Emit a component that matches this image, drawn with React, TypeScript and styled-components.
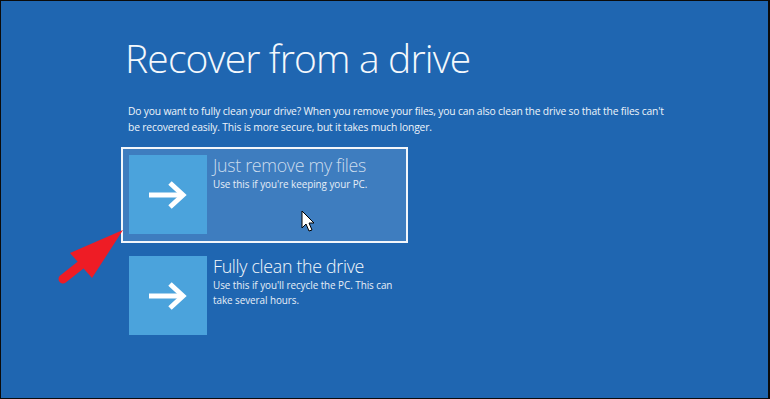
import React from "react";
import styled, { createGlobalStyle } from "styled-components";

const Global = createGlobalStyle`
  html, body { margin: 0; padding: 0; background: #000; }
  body { font-family: "Open Sans", "Noto Sans", sans-serif; }
`;

const Screen = styled.div`
  position: relative;
  width: 770px;
  height: 399px;
  box-sizing: border-box;
  border-style: solid;
  border-color: #0b0b0b;
  border-width: 1px 2px 1px 1px;
  background: #1f66b1;
  overflow: hidden;
  color: #fff;
`;

const Content = styled.div`
  display: flex;
  flex-direction: column;
  padding: 29px 0 0 120px;
`;

const Title = styled.h1`
  margin: 0 0 0 4px;
  font-family: "Open Sans", sans-serif;
  font-weight: 300;
  font-size: 39px;
  line-height: 56px;
  letter-spacing: -0.85px;
  color: #f4f8fc;
`;

const Intro = styled.p`
  margin: 17px 0 0 7px;
  width: 542px;
  font-size: 10.3px;
  line-height: 16px;
  letter-spacing: -0.17px;
  color: #eef4fa;
`;

const Options = styled.div`
  display: flex;
  flex-direction: column;
  gap: 5px;
  margin-top: 12px;
`;

const Option = styled.div<{ $selected?: boolean }>`
  display: flex;
  gap: 6px;
  width: 287px;
  height: 96px;
  box-sizing: border-box;
  padding: 6px;
  border: 2px solid ${(p) => (p.$selected ? "#f2f6fb" : "transparent")};
  background: ${(p) => (p.$selected ? "#3e7dbf" : "transparent")};
`;

const Tile = styled.div`
  flex: 0 0 78px;
  height: 79px;
  background: #4ba3dc;
  display: flex;
  align-items: center;
  justify-content: center;
`;

const Text = styled.div`
  display: flex;
  flex-direction: column;
`;

const OptionTitle = styled.div<{ $dim?: boolean }>`
  font-weight: 300;
  font-size: 17.8px;
  line-height: 22px;
  letter-spacing: -0.3px;
  color: ${(p) => (p.$dim ? "#cbdcee" : "#f4f8fc")};
  margin-top: -1px;
`;

const OptionDesc = styled.div`
  font-size: 9.9px;
  line-height: 15px;
  letter-spacing: -0.05px;
  color: #e6eef7;
  width: 200px;
  margin-top: 1px;
`;

const Overlay = styled.svg`
  position: absolute;
  left: 0;
  top: 0;
  pointer-events: none;
`;

const ArrowIcon = () => (
  <svg width="40" height="28" viewBox="0 0 40 28">
    <path d="M1 14 H34" stroke="#fff" strokeWidth="5" fill="none" />
    <path d="M22 2 L35 14 L22 26" stroke="#fff" strokeWidth="5" fill="none" strokeLinejoin="miter" />
  </svg>
);

export default function App() {
  return (
    <>
      <Global />
      <Screen>
        <Content>
          <Title>Recover from a drive</Title>
          <Intro>
            Do you want to fully clean your drive? When you remove your files, you can also clean the drive so that the files can't be recovered easily. This is more secure, but it takes much longer.
          </Intro>
          <Options>
            <Option $selected>
              <Tile>
                <ArrowIcon />
              </Tile>
              <Text>
                <OptionTitle $dim>Just remove my files</OptionTitle>
                <OptionDesc>Use this if you're keeping your PC.</OptionDesc>
              </Text>
            </Option>
            <Option>
              <Tile>
                <ArrowIcon />
              </Tile>
              <Text>
                <OptionTitle>Fully clean the drive</OptionTitle>
                <OptionDesc>Use this if you'll recycle the PC. This can take several hours.</OptionDesc>
              </Text>
            </Option>
          </Options>
        </Content>
        <Overlay width="770" height="399" viewBox="0 0 770 399">
          <line x1="62" y1="278" x2="86" y2="259" stroke="#ee1c25" strokeWidth="9" strokeLinecap="round" />
          <polygon points="122,229 69,252 91,277" fill="#ee1c25" />
          <path
            d="M301 210 L301 227 L305 223 L308 230 L311 229 L308 222 L313 222 Z"
            fill="#fff"
            stroke="#000"
            strokeWidth="1"
            strokeLinejoin="miter"
          />
        </Overlay>
      </Screen>
    </>
  );
}
